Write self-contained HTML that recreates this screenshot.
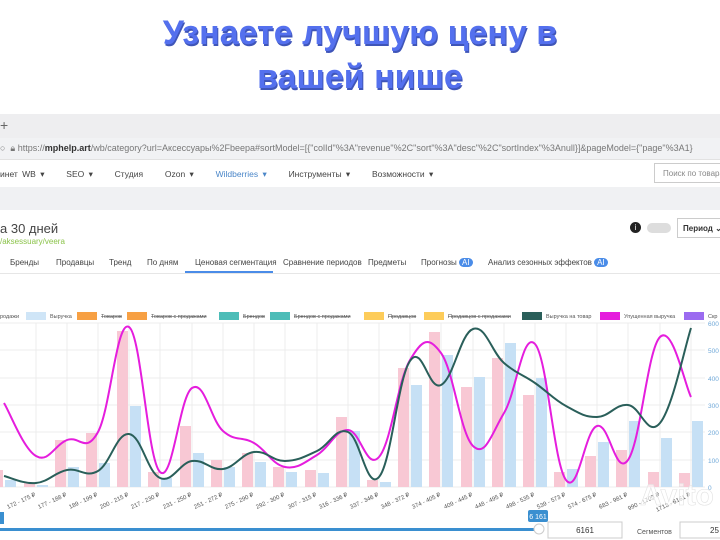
<!DOCTYPE html>
<html><head><meta charset="utf-8"><style>
*{margin:0;padding:0;box-sizing:border-box}
body{width:720px;height:540px;overflow:hidden;background:#fff;font-family:"Liberation Sans","Noto Sans CJK SC",sans-serif;position:relative;color:#333}
.h{position:absolute;left:0;width:720px;text-align:center;font-weight:bold;font-size:34px;color:#5470ee;text-shadow:1px 2px 0 #3f55b8}
.abs{position:absolute;white-space:nowrap}
</style></head><body>
<div class="h" style="top:14px">Узнаете лучшую цену в</div>
<div class="h" style="top:58px">вашей нише</div>

<div class="abs" style="left:0;top:114px;width:720px;height:24px;background:#eeeef0"></div>
<div class="abs" style="left:0;top:117px;font-size:14px;color:#666">+</div>
<div class="abs" style="left:0;top:138px;width:720px;height:22px;background:#f1f2f4;border-bottom:1px solid #e2e2e2"></div>
<div class="abs" style="left:0;top:143px;font-size:9px;color:#777">○ &nbsp;🔒︎ https://<b style="color:#333">mphelp.art</b>/wb/category?url=Аксессуары%2Fbeepa#sortModel=[{"colId"%3A"revenue"%2C"sort"%3A"desc"%2C"sortIndex"%3Anull}]&amp;pageModel={"page"%3A1}</div>
<div class="abs" style="left:0;top:161px;width:720px;height:26px;background:#fff"></div>
<div class="abs" style="left:0;top:169px;font-size:8.5px;color:#444;word-spacing:2px">инет WB ▾ &nbsp;&nbsp;&nbsp; SEO ▾ &nbsp;&nbsp;&nbsp; Студия &nbsp;&nbsp;&nbsp; Ozon ▾ &nbsp;&nbsp;&nbsp; <span style="color:#4a86c8">Wildberries ▾</span> &nbsp;&nbsp;&nbsp; Инструменты ▾ &nbsp;&nbsp;&nbsp; Возможности ▾</div>
<div class="abs" style="left:654px;top:163px;width:70px;height:20px;border:1px solid #ccc;font-size:8px;color:#888;padding:5px 0 0 8px">Поиск по товарам</div>
<div class="abs" style="left:0;top:187px;width:720px;height:23px;background:#f0f1f3"></div>
<div class="abs" style="left:0;top:221px;font-size:13px;color:#444">а 30 дней</div>
<div class="abs" style="left:0;top:237px;font-size:8px;color:#8bc34a">/aksessuary/veera</div>
<div class="abs" style="left:630px;top:222px;width:11px;height:11px;border-radius:50%;background:#222;color:#fff;font-size:8px;text-align:center;line-height:11px">i</div>
<div class="abs" style="left:647px;top:223px;width:24px;height:10px;border-radius:5px;background:#ddd"></div>
<div class="abs" style="left:677px;top:218px;width:46px;height:20px;border:1px solid #ccc;font-size:8px;color:#333;padding:5px 0 0 5px;font-weight:bold">Период ⌄</div>
<div class="abs" style="left:0;top:249px;width:720px;height:25px;border-bottom:1px solid #e6e6e6"></div>
<div class="abs" style="top:258px;font-size:8px;color:#444;left:0;width:720px">
<span class="abs" style="left:10px">Бренды</span><span class="abs" style="left:56px">Продавцы</span><span class="abs" style="left:109px">Тренд</span><span class="abs" style="left:147px">По дням</span><span class="abs" style="left:195px">Ценовая сегментация</span><span class="abs" style="left:283px">Сравнение периодов</span><span class="abs" style="left:368px">Предметы</span><span class="abs" style="left:421px">Прогнозы <span style="background:#4a8ce8;color:#fff;border-radius:5px;padding:0 3px">AI</span></span><span class="abs" style="left:488px">Анализ сезонных эффектов <span style="background:#4a8ce8;color:#fff;border-radius:5px;padding:0 3px">AI</span></span></div>
<div class="abs" style="left:185px;top:271px;width:88px;height:2px;background:#4a8ce8"></div>

<svg class="abs" style="left:0;top:300px" width="720" height="240" font-family="Liberation Sans, sans-serif">
<g font-size="5.5" fill="#555">
<text x="0" y="18">родажи</text>
<rect x="26" y="12" width="20" height="8" fill="#cfe5f7"/><text x="50" y="18">Выручка</text>
<rect x="77" y="12" width="20" height="8" fill="#f7a043"/><text x="101" y="18" text-decoration="line-through">Товаров</text>
<rect x="127" y="12" width="20" height="8" fill="#f7a043"/><text x="151" y="18" text-decoration="line-through">Товаров с продажами</text>
<rect x="219" y="12" width="20" height="8" fill="#4dbdb8"/><text x="243" y="18" text-decoration="line-through">Брендов</text>
<rect x="270" y="12" width="20" height="8" fill="#4dbdb8"/><text x="294" y="18" text-decoration="line-through">Брендов с продажами</text>
<rect x="364" y="12" width="20" height="8" fill="#fdcc5a"/><text x="388" y="18" text-decoration="line-through">Продавцов</text>
<rect x="424" y="12" width="20" height="8" fill="#fdcc5a"/><text x="448" y="18" text-decoration="line-through">Продавцов с продажами</text>
<rect x="522" y="12" width="20" height="8" fill="#2a5f5a"/><text x="546" y="18">Выручка на товар</text>
<rect x="600" y="12" width="20" height="8" fill="#e51ddd"/><text x="624" y="18">Упущенная выручка</text>
<rect x="684" y="12" width="20" height="8" fill="#9b6bf0"/><text x="708" y="18">Скр</text>
</g>
<g stroke="#ececec" stroke-width="1">
<line x1="0" y1="23" x2="705" y2="23"/><line x1="0" y1="50" x2="705" y2="50"/><line x1="0" y1="78" x2="705" y2="78"/><line x1="0" y1="105" x2="705" y2="105"/><line x1="0" y1="132" x2="705" y2="132"/><line x1="0" y1="160" x2="705" y2="160"/><line x1="0" y1="187" x2="705" y2="187"/>
<path d="M36 23V187M67 23V187M98 23V187M129 23V187M160 23V187M192 23V187M223 23V187M254 23V187M285 23V187M317 23V187M348 23V187M379 23V187M410 23V187M441 23V187M473 23V187M504 23V187M535 23V187M566 23V187M597 23V187M628 23V187M660 23V187M691 23V187"/>
</g>
<g font-size="6.5" fill="#6fa8d8"><text x="708" y="26">600</text><text x="708" y="53">500</text><text x="708" y="81">400</text><text x="708" y="108">300</text><text x="708" y="135">200</text><text x="708" y="163">100</text><text x="708" y="190">0</text></g>
<g fill="#f8c8d4" transform="translate(0,-300)">
<rect x="0" y="470" width="3" height="17"/>
<rect x="24" y="483" width="11" height="4"/><rect x="55" y="440" width="11" height="47"/><rect x="86" y="433" width="11" height="54"/><rect x="117" y="331" width="11" height="156"/><rect x="148" y="472" width="11" height="15"/><rect x="180" y="426" width="11" height="61"/><rect x="211" y="460" width="11" height="27"/><rect x="242" y="453" width="11" height="34"/><rect x="273" y="467" width="11" height="20"/><rect x="305" y="470" width="11" height="17"/><rect x="336" y="417" width="11" height="70"/><rect x="367" y="480" width="11" height="7"/><rect x="398" y="368" width="11" height="119"/><rect x="429" y="332" width="11" height="155"/><rect x="461" y="387" width="11" height="100"/><rect x="492" y="358" width="11" height="129"/><rect x="523" y="395" width="11" height="92"/><rect x="554" y="472" width="11" height="15"/><rect x="585" y="456" width="11" height="31"/><rect x="616" y="450" width="11" height="37"/><rect x="648" y="472" width="11" height="15"/><rect x="679" y="473" width="11" height="14"/>
</g>
<g fill="#c6e0f5" transform="translate(0,-300)">
<rect x="5" y="480" width="11" height="7"/>
<rect x="37" y="485" width="11" height="2"/><rect x="68" y="467" width="11" height="20"/><rect x="99" y="463" width="11" height="24"/><rect x="130" y="406" width="11" height="81"/><rect x="161" y="478" width="11" height="9"/><rect x="193" y="453" width="11" height="34"/><rect x="224" y="467" width="11" height="20"/><rect x="255" y="462" width="11" height="25"/><rect x="286" y="472" width="11" height="15"/><rect x="318" y="473" width="11" height="14"/><rect x="349" y="431" width="11" height="56"/><rect x="380" y="482" width="11" height="5"/><rect x="411" y="385" width="11" height="102"/><rect x="442" y="355" width="11" height="132"/><rect x="474" y="377" width="11" height="110"/><rect x="505" y="343" width="11" height="144"/><rect x="536" y="378" width="11" height="109"/><rect x="567" y="469" width="11" height="18"/><rect x="598" y="442" width="11" height="45"/><rect x="629" y="421" width="11" height="66"/><rect x="661" y="438" width="11" height="49"/><rect x="692" y="421" width="11" height="66"/>
</g>
<g fill="none" stroke-width="2" stroke-linejoin="round" transform="translate(0,-300)">
<path id="mg" stroke="#e51ddd" data-p="4,403 36,456 67,440 98,432 129,327 160,472 192,388 223,431 254,443 285,467 317,455 348,430 379,457 410,360 441,353 473,446 504,413 535,344 566,480 597,426 628,460 660,337 691,397" d=""/>
<path id="dk" stroke="#2a5f5a" data-p="4,476 36,483 67,470 98,471 129,434 160,478 192,461 223,469 254,452 285,461 317,451 348,432 379,477 410,361 441,385 473,329 504,363 535,383 566,406 597,417 628,405 660,423 691,328" d=""/>
</g>
<g font-size="6" fill="#555">
<text transform="translate(36,196) rotate(-25)" text-anchor="end">172 - 175 ₽</text><text transform="translate(67,196) rotate(-25)" text-anchor="end">177 - 188 ₽</text><text transform="translate(98,196) rotate(-25)" text-anchor="end">189 - 199 ₽</text><text transform="translate(129,196) rotate(-25)" text-anchor="end">200 - 215 ₽</text><text transform="translate(160,196) rotate(-25)" text-anchor="end">217 - 230 ₽</text><text transform="translate(192,196) rotate(-25)" text-anchor="end">231 - 250 ₽</text><text transform="translate(223,196) rotate(-25)" text-anchor="end">251 - 272 ₽</text><text transform="translate(254,196) rotate(-25)" text-anchor="end">275 - 290 ₽</text><text transform="translate(285,196) rotate(-25)" text-anchor="end">292 - 300 ₽</text><text transform="translate(317,196) rotate(-25)" text-anchor="end">307 - 315 ₽</text><text transform="translate(348,196) rotate(-25)" text-anchor="end">316 - 336 ₽</text><text transform="translate(379,196) rotate(-25)" text-anchor="end">337 - 346 ₽</text><text transform="translate(410,196) rotate(-25)" text-anchor="end">348 - 372 ₽</text><text transform="translate(441,196) rotate(-25)" text-anchor="end">374 - 405 ₽</text><text transform="translate(473,196) rotate(-25)" text-anchor="end">409 - 445 ₽</text><text transform="translate(504,196) rotate(-25)" text-anchor="end">448 - 495 ₽</text><text transform="translate(535,196) rotate(-25)" text-anchor="end">498 - 535 ₽</text><text transform="translate(566,196) rotate(-25)" text-anchor="end">539 - 573 ₽</text><text transform="translate(597,196) rotate(-25)" text-anchor="end">574 - 675 ₽</text><text transform="translate(628,196) rotate(-25)" text-anchor="end">683 - 981 ₽</text><text transform="translate(660,196) rotate(-25)" text-anchor="end">990 - 1705 ₽</text><text transform="translate(691,196) rotate(-25)" text-anchor="end">1713 - 6161 ₽</text>
</g>
<rect x="0" y="212" width="4" height="12" fill="#3a8fd0"/>
<rect x="528" y="210" width="20" height="12" rx="2" fill="#3a8fd0"/><text x="538" y="219" font-size="7" fill="#fff" text-anchor="middle">6 161</text>
<rect x="0" y="228" width="538" height="3" fill="#3a8fd0"/>
<circle cx="539" cy="229" r="5" fill="#fff" stroke="#ccc"/>
<rect x="548" y="222" width="74" height="16" fill="#fff" stroke="#ccc"/><text x="585" y="233" font-size="8" text-anchor="middle" fill="#333">6161</text>
<text x="637" y="234" font-size="7" fill="#555">Сегментов</text>
<rect x="680" y="222" width="42" height="16" fill="#fff" stroke="#ccc"/><text x="710" y="233" font-size="8" fill="#333">25</text>
<text x="640" y="205" font-size="30" font-weight="bold" fill="#fff" fill-opacity="0.6" stroke="#e2e2e2" stroke-width="0.6">Avito</text>
</svg>
<script>
['mg','dk'].forEach(function(id){
 var el=document.getElementById(id);
 var p=el.getAttribute('data-p').split(' ').map(function(s){return s.split(',').map(Number);});
 var d='M'+p[0][0]+','+p[0][1];
 for(var i=0;i<p.length-1;i++){
  var p0=p[i-1]||p[i],p1=p[i],p2=p[i+1],p3=p[i+2]||p2;
  var t=0.2;
  var c1x=p1[0]+(p2[0]-p0[0])*t,c1y=p1[1]+(p2[1]-p0[1])*t;
  var c2x=p2[0]-(p3[0]-p1[0])*t,c2y=p2[1]-(p3[1]-p1[1])*t;
  d+=' C'+c1x+','+c1y+' '+c2x+','+c2y+' '+p2[0]+','+p2[1];
 }
 el.setAttribute('d',d);
});
</script>
</body></html>
